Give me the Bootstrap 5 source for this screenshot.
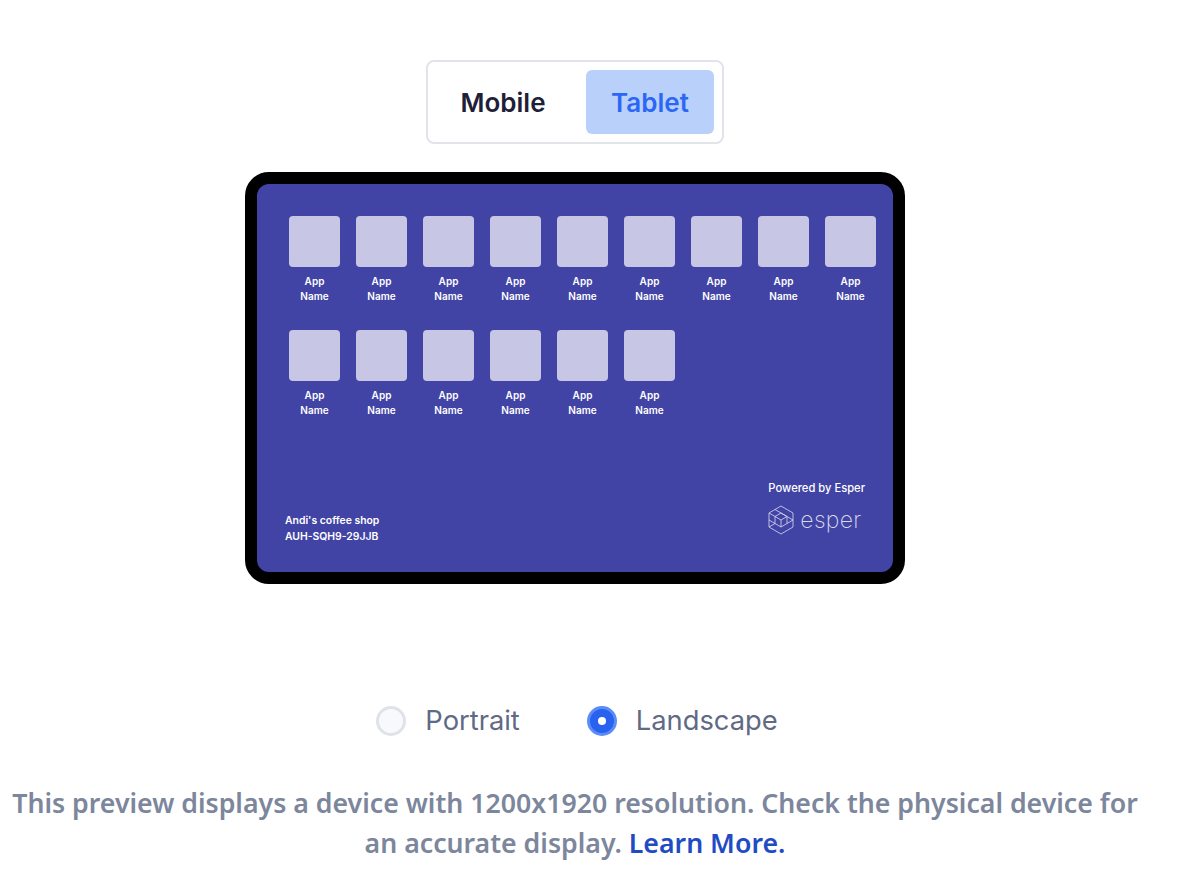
<!DOCTYPE html>
<html lang="en"><head><meta charset="utf-8"><title>Preview</title>
<link rel="stylesheet" href="https://cdn.jsdelivr.net/npm/bootstrap@5.3.0/dist/css/bootstrap.min.css">
<style>
html,body{background:#fff}
body{font-family:"Noto Sans","Liberation Sans",sans-serif;overflow:hidden}
.stage{width:1150px;height:872px;padding-top:60px}
.seg{width:298px;height:84px;border:2px solid #e2e4ea;border-radius:8px;padding:8px}
.seg-btn{height:64px;border-radius:6px;font-family:Inter,sans-serif;font-size:26px;font-weight:600;color:#1e2038;line-height:64px;border:0;background:none;padding:1px 0 0}
.seg-m{width:134px}
.seg-t{width:128px;margin-left:16px;background:#b9d1fa;color:#2b66f6}
.device{width:660px;height:412px;margin-top:28px;border:12px solid #000;border-radius:24px;background:#4144a5;padding:32px 17px 27px 32px;color:#fff}
.app-grid{display:grid;grid-template-columns:repeat(9,51px);column-gap:16px;row-gap:26px}
.app-tile{width:51px;height:51px;border-radius:4px;background:#c7c6e5}
.app-name{font-family:Inter,sans-serif;font-size:10px;font-weight:600;line-height:14.500px;margin-top:7px;text-align:center;height:30px;white-space:nowrap;width:51px}
.dev-foot{margin-top:auto;margin-left:-4px;margin-right:11px}
.shop{font-family:Inter,sans-serif;font-size:10.400px;font-weight:600;line-height:16px}
.pow{font-family:Inter,sans-serif;font-size:11.200px;font-weight:500;line-height:16px}
.brand-wrap{margin-bottom:10px;margin-top:9px;gap:6px}
.brand{color:#d9d9ef;font-family:Inter,sans-serif;font-size:23px;font-weight:200;line-height:26px;letter-spacing:.3px}
.orient{margin-top:117px;padding-left:4px;font-size:27.300px;font-family:Inter,sans-serif;color:#5f6a85;height:40px}
.dot{width:30px;height:30px;border-radius:50%;border:3px solid #e0e2e9;background:#f8f9fc;display:block}
.dot-on{border:3px solid #5c8df6;background:#2a62f0;position:relative;margin-left:67px}
.dot-on::after{content:"";position:absolute;left:8px;top:8px;width:8px;height:8px;background:#fff;border-radius:50%}
.lbl{margin-left:19px}
.note{font-size:26.700px;font-weight:600;line-height:40px;color:#7c869c;margin-top:42px;white-space:nowrap}
.note a{color:#1f4bc4;text-decoration:none}
</style></head><body>
<div class="stage d-flex flex-column align-items-center">
  <div class="seg d-flex bg-white">
    <button class="seg-btn seg-m">Mobile</button>
    <button class="seg-btn seg-t">Tablet</button>
  </div>
  <div class="device d-flex flex-column">
    <div class="app-grid">
      <div><div class="app-tile"></div><div class="app-name">App<br>Name</div></div>
      <div><div class="app-tile"></div><div class="app-name">App<br>Name</div></div>
      <div><div class="app-tile"></div><div class="app-name">App<br>Name</div></div>
      <div><div class="app-tile"></div><div class="app-name">App<br>Name</div></div>
      <div><div class="app-tile"></div><div class="app-name">App<br>Name</div></div>
      <div><div class="app-tile"></div><div class="app-name">App<br>Name</div></div>
      <div><div class="app-tile"></div><div class="app-name">App<br>Name</div></div>
      <div><div class="app-tile"></div><div class="app-name">App<br>Name</div></div>
      <div><div class="app-tile"></div><div class="app-name">App<br>Name</div></div>
      <div><div class="app-tile"></div><div class="app-name">App<br>Name</div></div>
      <div><div class="app-tile"></div><div class="app-name">App<br>Name</div></div>
      <div><div class="app-tile"></div><div class="app-name">App<br>Name</div></div>
      <div><div class="app-tile"></div><div class="app-name">App<br>Name</div></div>
      <div><div class="app-tile"></div><div class="app-name">App<br>Name</div></div>
      <div><div class="app-tile"></div><div class="app-name">App<br>Name</div></div>
    </div>
    <div class="dev-foot d-flex justify-content-between align-items-end">
      <div class="shop">Andi's coffee shop<br>AUH-SQH9-29JJB</div>
      <div class="d-flex flex-column">
        <div class="pow">Powered by Esper</div>
        <div class="brand-wrap d-flex align-items-center">
          <svg width="26" height="30" viewBox="0 0 26 30" fill="none" stroke="#dcdcf0" stroke-width=".8"><path d="M13 1 25 8v14l-12 7L1 22V8z"/><path d="M1 8l6 3.500 6-3.500 12 7M7 4.500l12 7-6 3.500-6-3.500v7l6 3.500 12-7M1 15l6 3.500M1 22l6-3.500M13 15v7M19 11.500v7"/></svg>
          <span class="brand">esper</span>
        </div>
      </div>
    </div>
  </div>
  <div class="orient d-flex align-items-center">
    <span class="dot"></span><span class="lbl">Portrait</span>
    <span class="dot dot-on"></span><span class="lbl">Landscape</span>
  </div>
  <p class="note text-center mb-0">This preview displays a device with 1200x1920 resolution. Check the physical device for<br>an accurate display. <a href="#">Learn More.</a></p>
</div>
</body></html>
